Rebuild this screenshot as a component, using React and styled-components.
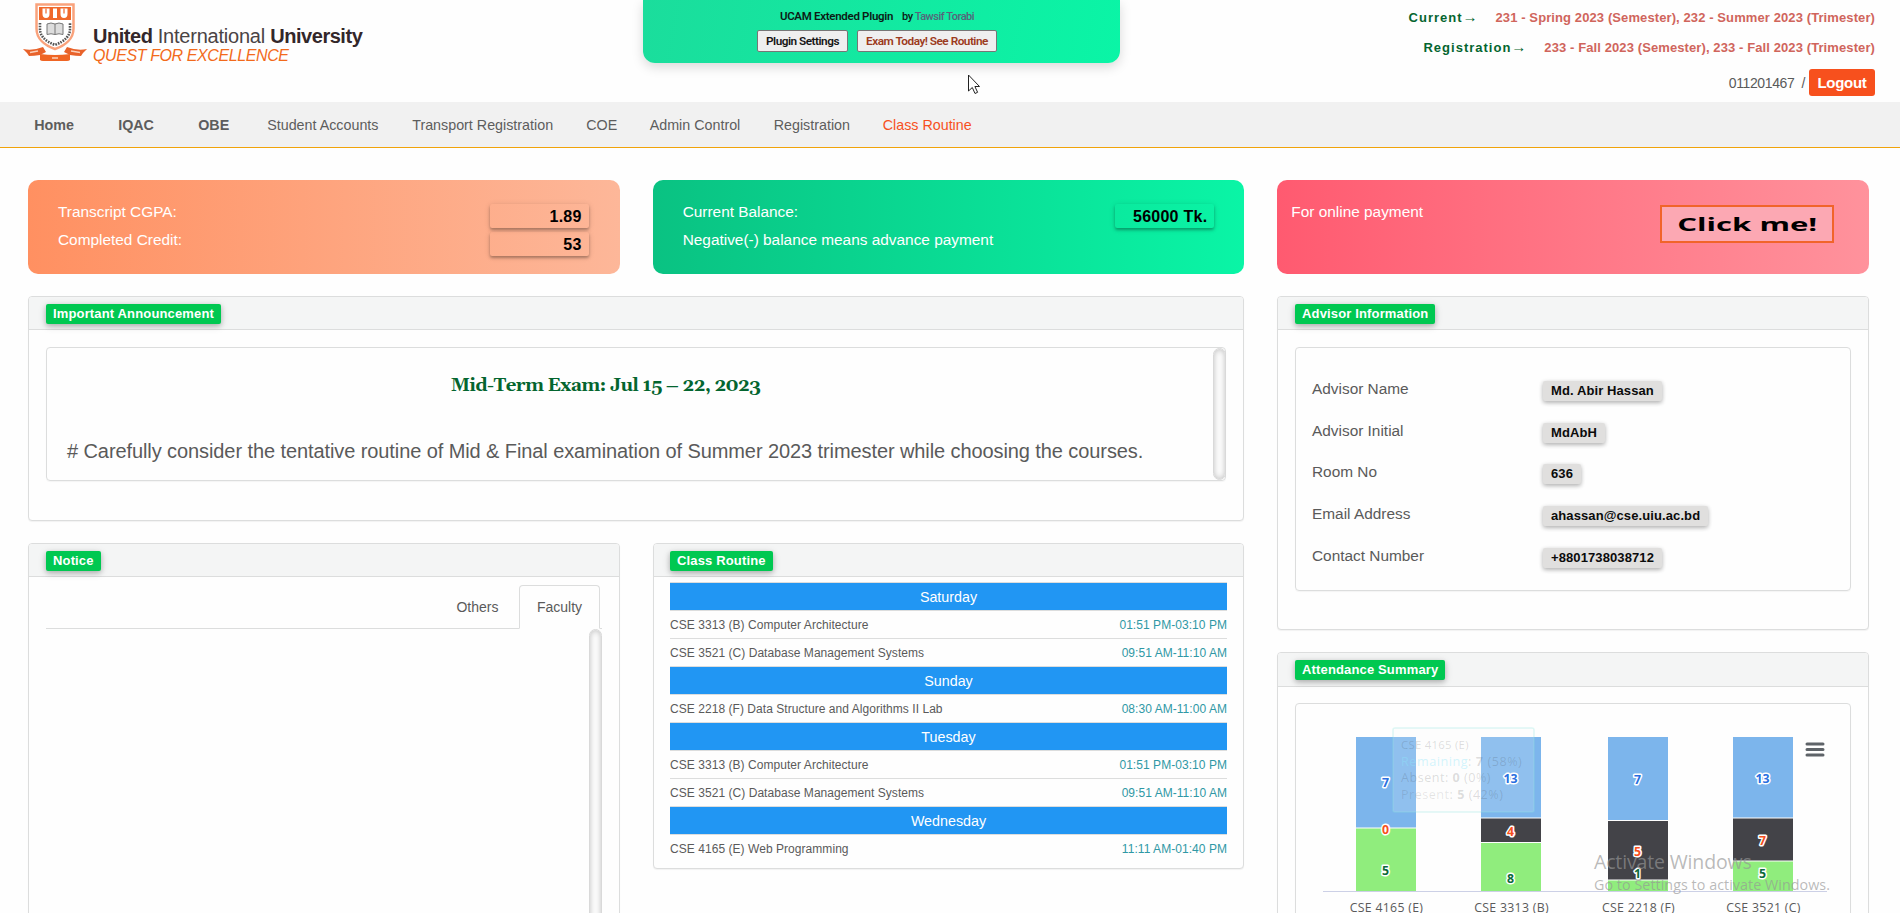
import React from "react";
import styled, { createGlobalStyle } from "styled-components";

const Global = createGlobalStyle`
  * { box-sizing: border-box; }
  html, body { margin: 0; padding: 0; height: 913px; overflow: hidden; background: #fefefe; }
  body { font-family: "Liberation Sans", Arial, sans-serif; font-size: 14px; color: #5a5a5a; }
`;

const Page = styled.div`
  position: relative;
  width: 1900px;
  height: 913px;
  overflow: hidden;
  background: #fefefe;
`;

/* ---------- header ---------- */
const Header = styled.header`
  height: 102px;
  display: flex;
  justify-content: space-between;
  padding: 0 25px 0 22px;
`;
const Brand = styled.div`
  display: flex;
  gap: 6px;
  height: 66px;
`;
const BrandText = styled.div`
  padding-top: 25px;
  white-space: nowrap;
`;
const BrandName = styled.div`
  font-size: 20px;
  line-height: 22px;
  letter-spacing: -0.23px;
  color: #4a4344;
  b { color: #33272a; letter-spacing: -0.46px; }
`;
const BrandMotto = styled.div`
  font-size: 16px;
  line-height: 18px;
  font-style: italic;
  letter-spacing: -0.4px;
  color: #f26a1b;
`;
const Account = styled.div`
  display: flex;
  flex-direction: column;
  align-items: flex-end;
`;
const Term = styled.div`
  height: 30px;
  padding: 4px 0 0 0;
  display: flex;
  align-items: center;
  gap: 17px;
  font-weight: bold;
  font-size: 13px;
  letter-spacing: 0.1px;
  white-space: nowrap;
  color: #d0655c;
`;
const TermLabel = styled.span`
  color: #04652f;
  letter-spacing: 1px;
  line-height: 16px;
  i { font-style: normal; font-size: 15px; }
`;
const UserLine = styled.div`
  margin-top: 9px;
  display: flex;
  align-items: center;
  font-size: 14px;
  letter-spacing: -0.37px;
  white-space: pre;
`;
const Logout = styled.button`
  margin-left: 4px;
  width: 66px;
  height: 27px;
  padding: 0;
  border: 0;
  border-radius: 3px;
  background: #f7501d;
  color: #fff;
  font: bold 15px "Liberation Sans", sans-serif;
  letter-spacing: -0.3px;
`;

/* ---------- plugin banner ---------- */
const Banner = styled.div`
  position: absolute;
  top: 0;
  left: 643px;
  width: 477px;
  height: 63px;
  border-radius: 0 0 12px 12px;
  background: linear-gradient(100deg, #1bdd9c, #0af5a6);
  box-shadow: 0 4px 12px rgba(0, 0, 0, 0.15);
  display: flex;
  flex-direction: column;
  align-items: center;
  padding: 8px 9px 0 0;
  font-family: Roboto, sans-serif;
`;
const BannerTitle = styled.div`
  display: flex;
  gap: 9px;
  height: 17px;
  line-height: 17px;
  font-size: 11.5px;
  font-weight: 600;
  letter-spacing: -0.3px;
  color: #0c1c16;
  small { font-size: 11px; font-weight: 500; letter-spacing: -0.48px; }
  a { color: #56657a; }
`;
const BannerButtons = styled.div`
  display: flex;
  gap: 9px;
  margin-top: 5px;
`;
const BannerButton = styled.button`
  width: ${(p) => p.$w}px;
  height: 22px;
  padding: 0;
  border: 1px solid #767676;
  border-radius: 2px;
  background: #efefef;
  font: 600 11.8px/18px Roboto, sans-serif;
  letter-spacing: -0.5px;
  white-space: nowrap;
  color: ${(p) => (p.$alert ? "#9c3a20" : "#161616")};
`;

/* ---------- navigation ---------- */
const Nav = styled.nav`
  height: 46px;
  background: #f1f1f1;
  border-bottom: 1px solid #f0a30a;
  display: flex;
  align-items: center;
  padding-left: 34.2px;
`;
const NavItem = styled.a`
  width: ${(p) => p.$w}px;
  font-size: 14.3px;
  white-space: nowrap;
  font-weight: ${(p) => (p.$bold ? "bold" : "normal")};
  color: ${(p) => (p.$hot ? "#f7501d" : "#5d5d5d")};
`;

/* ---------- layout ---------- */
const Main = styled.main`
  padding: 32px 31px 0 28px;
  display: flex;
  flex-direction: column;
  gap: 22px;
`;
const Thirds = styled.div`
  display: grid;
  grid-template-columns: repeat(3, 1fr);
  column-gap: 33px;
`;
const Columns = styled.div`
  display: grid;
  grid-template-columns: 1216px 592px;
  column-gap: 33px;
`;
const Stack = styled.div`
  display: flex;
  flex-direction: column;
  gap: 22px;
`;
const Halves = styled.div`
  display: grid;
  grid-template-columns: 592px 591px;
  column-gap: 33px;
  align-items: start;
`;

/* ---------- gradient cards ---------- */
const Card = styled.section`
  height: 94px;
  border-radius: 10px;
  background: linear-gradient(90deg, ${(p) => p.$from}, ${(p) => p.$to});
  display: flex;
  justify-content: space-between;
  padding: 24px ${(p) => p.$right || 31}px 0 ${(p) => p.$left || 30}px;
  color: #fff;
  font-size: 15.4px;
`;
const CardLabels = styled.div`
  margin-top: -6px;
  line-height: 28px;
`;
const CardValues = styled.div`
  display: flex;
  flex-direction: column;
  gap: 4px;
`;
const CardValue = styled.div`
  width: 99px;
  height: 24px;
  padding: 0 7px 0 0;
  border-radius: 2px;
  line-height: 25px;
  text-align: right;
  font-weight: bold;
  font-size: 16px;
  letter-spacing: 0.25px;
  color: #000;
  box-shadow: 0 2px 3px rgba(0, 0, 0, 0.28), 0 1px 6px rgba(0, 0, 0, 0.12);
`;
const PayButton = styled.button`
  margin-top: 1px;
  width: 174px;
  height: 38px;
  padding: 1px 0 0;
  border: 2px solid #f1642a;
  background: #fca8b3;
  display: flex;
  align-items: center;
  justify-content: center;
  span {
    font: bold 17px/30px "Open Sans", sans-serif;
    transform: scaleX(1.83);
    white-space: nowrap;
    color: #000;
  }
`;

/* ---------- panels ---------- */
const Panel = styled.section`
  height: ${(p) => p.$h}px;
  border: 1px solid #dcdddd;
  border-radius: 4px;
  background: #fefefe;
  box-shadow: 0 1px 1px rgba(0, 0, 0, 0.05);
`;
const PanelHead = styled.div`
  height: ${(p) => p.$h || 33}px;
  border-bottom: 1px solid #dcdddd;
  border-radius: 3px 3px 0 0;
  background: #f4f5f5;
  padding: 7px 0 0 ${(p) => p.$left || 17}px;
`;
const Tag = styled.span`
  display: block;
  width: fit-content;
  height: 20px;
  padding: 0 7px;
  border-radius: 2px;
  background: #00c851;
  color: #fff;
  font-weight: bold;
  font-size: 13px;
  line-height: 19px;
  letter-spacing: 0.15px;
  white-space: nowrap;
  box-shadow: 0 2px 5px rgba(0, 0, 0, 0.2), 0 2px 8px rgba(0, 0, 0, 0.14);
`;
const Well = styled.div`
  height: ${(p) => p.$h}px;
  margin: ${(p) => p.$top || 17}px 17px 0;
  border: 1px solid #dcdddd;
  border-radius: 4px;
  box-shadow: 0 1px 1px rgba(0, 0, 0, 0.04);
`;
const ScrollTrack = styled.div`
  width: 13px;
  flex: none;
  margin-right: ${(p) => (p.$overlap ? -1 : 0)}px;
  border-radius: 7px;
  border: 1px solid #d9d9d9;
  box-shadow: inset 0 0 6px rgba(0, 0, 0, 0.26);
`;
const Announcement = styled(Well)`
  display: flex;
`;
const AnnouncementBody = styled.div`
  flex: 1;
  padding: 24px 50px 0 20px;
`;
const ExamTitle = styled.h2`
  margin: 0;
  width: 1077px;
  text-align: center;
  font: bold 18.7px/28px Georgia, Gelasio, "DejaVu Serif", serif;
  letter-spacing: -0.6px;
  color: #04652f;
  white-space: nowrap;
`;
const ExamNote = styled.p`
  margin: 37px 0 0;
  font-size: 20px;
  line-height: 28px;
  letter-spacing: -0.09px;
  white-space: nowrap;
`;

/* ---------- notice ---------- */
const NoticeBody = styled.div`
  padding: 8px 17px 0;
`;
const Tabs = styled.div`
  height: 44px;
  border-bottom: 1px solid #dcdddd;
  display: flex;
  justify-content: flex-end;
  padding-right: 2px;
`;
const Tab = styled.div`
  width: ${(p) => p.$w}px;
  height: 44px;
  line-height: 42px;
  text-align: center;
  font-size: 14px;
  border: 1px solid ${(p) => (p.$active ? "#dcdddd" : "transparent")};
  border-bottom-color: ${(p) => (p.$active ? "#fefefe" : "#dcdddd")};
  border-radius: 4px 4px 0 0;
`;
const NoticeScroll = styled.div`
  height: 320px;
  display: flex;
  justify-content: flex-end;
`;

/* ---------- routine ---------- */
const RoutineTable = styled.div`
  padding: 5px 16px 0;
`;
const Day = styled.div`
  height: 28px;
  border-top: 1px solid #dcdddd;
  background: #2196f3;
  color: #fff;
  text-align: center;
  font-size: 14.3px;
  line-height: 28px;
`;
const Lesson = styled.div`
  height: 28px;
  border-top: 1px solid #dcdddd;
  display: flex;
  justify-content: space-between;
  font-size: 12px;
  line-height: 29px;
  letter-spacing: 0.05px;
  time { color: #2f98a5; }
`;

/* ---------- advisor ---------- */
const AdvisorWell = styled(Well)`
  padding: 20px 0 0 16px;
`;
const AdvisorRow = styled.div`
  height: 41.8px;
  display: grid;
  grid-template-columns: 231px 1fr;
  align-items: center;
  font-size: 15.4px;
`;
const AdvisorValue = styled(Tag)`
  margin-top: 4px;
  padding: 0 8px;
  letter-spacing: 0.1px;
  background: #e0dfde;
  color: #0b0b0b;
  box-shadow: 0 2px 4px rgba(0, 0, 0, 0.22), 0 1px 5px rgba(0, 0, 0, 0.12);
`;

/* ---------- attendance ---------- */
const ChartText = styled.text`
  font-family: "Open Sans", "Noto Sans", sans-serif;
  font-size: ${(p) => p.$size || 12.3}px;
  letter-spacing: ${(p) => p.$ls || 0}px;
  font-weight: ${(p) => (p.$bold ? 700 : 400)};
  text-anchor: ${(p) => p.$anchor || "middle"};
  paint-order: stroke;
  stroke: ${(p) => (p.$halo ? "#fff" : "none")};
  stroke-width: 3px;
  stroke-linejoin: round;
`;
const Watermark = styled.div`
  position: absolute;
  left: 1594px;
  top: 848px;
  font-family: "Open Sans", sans-serif;
  color: rgba(150, 150, 150, 0.66);
  white-space: nowrap;
`;
const WatermarkTitle = styled.div`
  font-size: 19.5px;
  line-height: 28px;
  letter-spacing: -0.15px;
`;
const WatermarkNote = styled.div`
  font-size: 14.3px;
  line-height: 18px;
  letter-spacing: 0.05px;
`;
const Cursor = styled.svg`
  position: absolute;
  left: 967px;
  top: 74px;
`;

const NAV = [
  ["Home", 84, 1], ["IQAC", 80, 1], ["OBE", 69, 1], ["Student Accounts", 145],
  ["Transport Registration", 174], ["COE", 63.5], ["Admin Control", 124],
  ["Registration", 109], ["Class Routine", 100, 0, 1],
];

const ROUTINE = [
  ["Saturday", [["CSE 3313 (B) Computer Architecture", "01:51 PM-03:10 PM"], ["CSE 3521 (C) Database Management Systems", "09:51 AM-11:10 AM"]]],
  ["Sunday", [["CSE 2218 (F) Data Structure and Algorithms II Lab", "08:30 AM-11:00 AM"]]],
  ["Tuesday", [["CSE 3313 (B) Computer Architecture", "01:51 PM-03:10 PM"], ["CSE 3521 (C) Database Management Systems", "09:51 AM-11:10 AM"]]],
  ["Wednesday", [["CSE 4165 (E) Web Programming", "11:11 AM-01:40 PM"]]],
];

const ADVISOR = [
  ["Advisor Name", "Md. Abir Hassan"],
  ["Advisor Initial", "MdAbH"],
  ["Room No", "636"],
  ["Email Address", "ahassan@cse.uiu.ac.bd"],
  ["Contact Number", "+8801738038712"],
];

/* remaining / absent / present counts, lower edges of the top two segments, label centres */
const BARS = [
  { x: 60, name: "CSE 4165 (E)", r: 7, a: 0, p: 5, b: 123.5, d: 123.5, ry: 78, ay: 125, py: 166 },
  { x: 185, name: "CSE 3313 (B)", r: 13, a: 4, p: 8, b: 113.5, d: 138, ry: 74, ay: 127, py: 174 },
  { x: 312, name: "CSE 2218 (F)", r: 7, a: 5, p: 1, b: 116, d: 175.5, ry: 75, ay: 147, py: 169 },
  { x: 437, name: "CSE 3521 (C)", r: 13, a: 7, p: 5, b: 113.5, d: 156.5, ry: 74, ay: 136, py: 169 },
];

function Crest() {
  return (
    <svg width="65" height="66" viewBox="0 0 65 66">
      <path d="M14.500 4.500h37v24c0 10-8 17-18.500 20.500-10.500-3.500-18.500-10.500-18.500-20.500z" fill="#fff" stroke="#f9a27c" strokeWidth="2.500" />
      <path d="M17 7h32v13H17z" fill="#f0682a" />
      <path d="M20.500 8.500v5.500q0 4 3.500 4t3.500-4V8.500z M31 8.500h4v9.500h-4z M38.500 8.500v5.500q0 4 3.500 4t3.500-4V8.500z" fill="#fff" />
      <path d="M24 8.500v5M42 8.500v5" stroke="#f0682a" strokeWidth="1.200" />
      <path d="M25 24q4-2 8 0q4-2 8 0v10.500q-4-1.500-8 0q-4-1.500-8 0z" fill="#ddd" stroke="#777" strokeWidth="1" />
      <path d="M33 24v10.500" stroke="#777" />
      <path d="M18 23v6c0 7 5 12 15 16c10-4 15-9 15-16v-6" fill="none" stroke="#555" strokeWidth="2.600" strokeDasharray="1.600 1.100" />
      <path d="M1 49q10 2 20-2l3 5-6 3q-6 1-11 1l-2-3z" fill="#e8622a" />
      <path d="M65 49q-10 2-20-2l-3 5 6 3q6 1 11 1l2-3z" fill="#e8622a" />
      <path d="M18 54q15 2 30 0v6q-1 1-3 1H21q-2 0-3-1z" fill="#ef6524" />
      <path d="M8 52.500l8-1.500M49 51l9 1.500M30 58h6" stroke="#fbd0b8" strokeWidth="1.600" />
    </svg>
  );
}

function AttendanceChart() {
  return (
    <svg width="553" height="209" viewBox="0 0 553 209" display="block">
      {BARS.map((s) => (
        <g key={s.name}>
          <rect x={s.x} y="33" width="60" height={s.b - 33} fill="#7cb5ec" />
          {s.a > 0 && <rect x={s.x} y={s.b + 1} width="60" height={s.d - s.b - 1} fill="#434348" />}
          <rect x={s.x} y={s.d + 1} width="60" height={186.5 - s.d} fill="#90ed7d" />
        </g>
      ))}
      <path d="M27 187.500H531" stroke="#ccd0e6" />
      <rect x="97" y="24" width="141" height="84" rx="2" fill="#f7f7f7" fillOpacity="0.16" stroke="#91e8e1" strokeOpacity="0.3" strokeWidth="1.500" />
      <g fill="#333" fillOpacity="0.17">
        <ChartText $anchor="start" $size={11.4} $ls={0.25} x="105" y="45">CSE 4165 (E)</ChartText>
        <ChartText $anchor="start" $size={12.6} $ls={0.55} x="105" y="62"><tspan fill="#8fe6fb" fillOpacity="0.4">Remaining</tspan>: <tspan fontWeight="700">7</tspan> (58%)</ChartText>
        <ChartText $anchor="start" $size={12.6} $ls={0.5} x="105" y="78">Absent: <tspan fontWeight="700">0</tspan> (0%)</ChartText>
        <ChartText $anchor="start" $size={12.6} $ls={0.5} x="105" y="95"><tspan fillOpacity="0.12">Present</tspan>: <tspan fontWeight="700">5</tspan> (42%)</ChartText>
      </g>
      {BARS.map((s) => (
        <g key={s.name}>
          <ChartText $bold $halo x={s.x + 29.5} y={s.ry + 4.5} fill="#2a6fe0">{s.r}</ChartText>
          <ChartText $bold $halo x={s.x + 29.5} y={s.ay + 4.5} fill="#f7501d">{s.a}</ChartText>
          <ChartText $bold $halo x={s.x + 29.5} y={s.py + 4.5} fill="#0c6a3a">{s.p}</ChartText>
          <ChartText $ls={0.3} x={s.x + 30.5} y="207.500" fill="#5a5a5a">{s.name}</ChartText>
        </g>
      ))}
      <path d="M511 40h16M511 45.500h16M511 51h16" stroke="#5e6368" strokeWidth="3" strokeLinecap="round" />
    </svg>
  );
}

export default function App() {
  return (
    <Page>
      <Global />
      <Header>
        <Brand>
          <Crest />
          <BrandText>
            <BrandName><b>United</b> International <b>University</b></BrandName>
            <BrandMotto>QUEST FOR EXCELLENCE</BrandMotto>
          </BrandText>
        </Brand>
        <Account>
          <Term><TermLabel>Current<i>→</i></TermLabel><span>231 - Spring 2023 (Semester), 232 - Summer 2023 (Trimester)</span></Term>
          <Term><TermLabel>Registration<i>→</i></TermLabel><span>233 - Fall 2023 (Semester), 233 - Fall 2023 (Trimester)</span></Term>
          <UserLine>011201467  /<Logout>Logout</Logout></UserLine>
        </Account>
      </Header>
      <Banner>
        <BannerTitle>UCAM Extended Plugin <small>by <a>Tawsif Torabi</a></small></BannerTitle>
        <BannerButtons>
          <BannerButton $w={91}>Plugin Settings</BannerButton>
          <BannerButton $w={140} $alert>Exam Today! See Routine</BannerButton>
        </BannerButtons>
      </Banner>
      <Nav>
        {NAV.map(([t, w, b, h]) => <NavItem key={t} $w={w} $bold={b} $hot={h}>{t}</NavItem>)}
      </Nav>
      <Main>
        <Thirds>
          <Card $from="#ff9061" $to="#fdb799">
            <CardLabels>Transcript CGPA:<br />Completed Credit:</CardLabels>
            <CardValues><CardValue>1.89</CardValue><CardValue>53</CardValue></CardValues>
          </Card>
          <Card $from="#0ac282" $to="#0af5a6" $right={30}>
            <CardLabels>Current Balance:<br />Negative(-) balance means advance payment</CardLabels>
            <CardValues><CardValue>56000 Tk.</CardValue></CardValues>
          </Card>
          <Card $from="#ff5a70" $to="#ff929c" $left={14} $right={35}>
            <CardLabels>For online payment</CardLabels>
            <PayButton><span>Click me!</span></PayButton>
          </Card>
        </Thirds>
        <Columns>
          <Stack>
            <Panel $h={225}>
              <PanelHead><Tag>Important Announcement</Tag></PanelHead>
              <Announcement $h={134}>
                <AnnouncementBody>
                  <ExamTitle>Mid-Term Exam: Jul 15 – 22, 2023</ExamTitle>
                  <ExamNote># Carefully consider the tentative routine of Mid &amp; Final examination of Summer 2023 trimester while choosing the courses.</ExamNote>
                </AnnouncementBody>
                <ScrollTrack $overlap />
              </Announcement>
            </Panel>
            <Halves>
              <Panel $h={420}>
                <PanelHead><Tag>Notice</Tag></PanelHead>
                <NoticeBody>
                  <Tabs><Tab $w={83}>Others</Tab><Tab $w={81} $active>Faculty</Tab></Tabs>
                  <NoticeScroll><ScrollTrack /></NoticeScroll>
                </NoticeBody>
              </Panel>
              <Panel $h={326}>
                <PanelHead $left={16}><Tag>Class Routine</Tag></PanelHead>
                <RoutineTable>
                  {ROUTINE.map(([day, rows]) => (
                    <React.Fragment key={day}>
                      <Day>{day}</Day>
                      {rows.map(([name, time]) => <Lesson key={name}><span>{name}</span><time>{time}</time></Lesson>)}
                    </React.Fragment>
                  ))}
                </RoutineTable>
              </Panel>
            </Halves>
          </Stack>
          <Stack>
            <Panel $h={334}>
              <PanelHead><Tag>Advisor Information</Tag></PanelHead>
              <AdvisorWell $h={244}>
                {ADVISOR.map(([k, v]) => <AdvisorRow key={k}><span>{k}</span><AdvisorValue>{v}</AdvisorValue></AdvisorRow>)}
              </AdvisorWell>
            </Panel>
            <Panel $h={400}>
              <PanelHead $h={34}><Tag>Attendance Summary</Tag></PanelHead>
              <Well $h={300} $top={16}><AttendanceChart /></Well>
            </Panel>
          </Stack>
        </Columns>
      </Main>
      <Watermark>
        <WatermarkTitle>Activate Windows</WatermarkTitle>
        <WatermarkNote>Go to Settings to activate Windows.</WatermarkNote>
      </Watermark>
      <Cursor width="14" height="21" viewBox="0 0 14 21">
        <path d="M1.500 1v16l3.800-3.500 2.700 6 2.600-1.200-2.700-5.800h4.600z" fill="#fff" stroke="#222" />
      </Cursor>
    </Page>
  );
}
